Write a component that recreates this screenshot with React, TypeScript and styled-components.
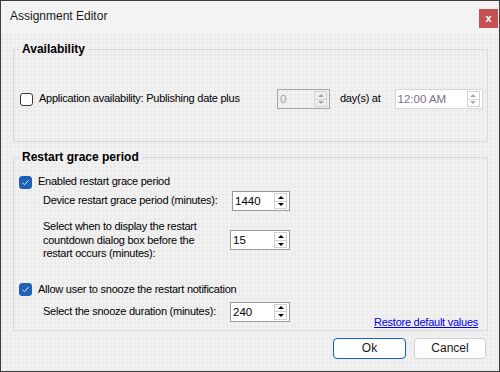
import React from "react";
import styled, { createGlobalStyle } from "styled-components";

const GlobalStyle = createGlobalStyle`
  html, body {
    margin: 0;
    padding: 0;
    background: #ffffff;
  }
  body {
    font-family: "Liberation Sans", Arial, sans-serif;
  }
`;

const Window = styled.div`
  width: 500px;
  height: 372px;
  box-sizing: border-box;
  border: 1px solid #3c3c3c;
  background: #f0f0f0;
  display: flex;
  flex-direction: column;
`;

const TitleBar = styled.div`
  height: 32px;
  flex: none;
  display: flex;
  align-items: center;
  justify-content: space-between;
  padding: 0 1px 0 9px;
  background: #f3f3f3;
`;

const Title = styled.span`
  font-size: 12px;
  color: #1a1a1a;
  margin-top: -2px;
`;

const CloseButton = styled.button`
  width: 19px;
  height: 19px;
  border: 0;
  padding: 0;
  margin-top: 3px;
  background: #c75050;
  color: #ffffff;
  font: bold 11px/19px "Liberation Sans", Arial, sans-serif;
`;

const Body = styled.div`
  flex: 1;
  display: flex;
  flex-direction: column;
  padding: 9px 11px 0 12px;
  background-color: #f0f0f0;
  background-image: radial-gradient(circle, #e9e9e9 0.7px, transparent 0.9px);
  background-size: 4px 4px;
`;

const Group = styled.fieldset<{ $gap?: number }>`
  margin: ${(p) => p.$gap ?? 0}px 0 0 0;
  padding: 0;
  min-width: 0;
  border: 1px solid #d9d9d9;
`;

const Legend = styled.legend`
  margin-left: 5px;
  padding: 0 3px;
  font: bold 12px/14px "Liberation Sans", Arial, sans-serif;
  color: #000000;
`;

const Text = styled.span<{ $ml?: number; $color?: string }>`
  margin-left: ${(p) => p.$ml ?? 0}px;
  font-size: 11px;
  letter-spacing: -0.25px;
  line-height: 13.5px;
  color: ${(p) => p.$color ?? "#000000"};
  white-space: nowrap;
`;

const AvailRow = styled.div`
  display: flex;
  align-items: center;
  padding: 33px 0 32px 6px;
`;

const CheckLabel = styled.label<{ $w?: number }>`
  display: flex;
  align-items: center;
  gap: 6px;
  height: 16px;
  width: ${(p) => (p.$w ? `${p.$w}px` : "auto")};
  flex: none;
`;

const Box = styled.span<{ $checked?: boolean }>`
  width: 13px;
  height: 13px;
  box-sizing: border-box;
  border-radius: 3px;
  border: 1px solid ${(p) => (p.$checked ? "#1d62b6" : "#3a3a3a")};
  background: ${(p) => (p.$checked ? "#1d62b6" : "#ffffff")};
  display: inline-flex;
  align-items: center;
  justify-content: center;
  flex: none;
`;

const GraceBody = styled.div`
  display: flex;
  flex-direction: column;
  padding: 10px 9px 0 5px;
`;

const Indent = styled.div<{ $mt?: number }>`
  padding-left: 24px;
  margin-top: ${(p) => p.$mt ?? 0}px;
`;

const FieldRow = styled.div<{ $label: number }>`
  display: grid;
  grid-template-columns: ${(p) => p.$label}px auto;
  align-items: center;
  justify-content: start;
`;

const SnoozeRow = styled.div`
  display: flex;
  align-items: flex-end;
  justify-content: space-between;
  margin-top: 4px;
  padding-left: 24px;
`;

const SnoozeField = styled(FieldRow)`
  margin-bottom: 8px;
`;

const Link = styled.a`
  font-size: 11px;
  letter-spacing: -0.25px;
  line-height: 14px;
  color: #0000f0;
  text-decoration: underline;
  margin-bottom: 1px;
  cursor: pointer;
`;

const CheckSpacer = styled.div<{ $mt: number }>`
  margin-top: ${(p) => p.$mt}px;
`;

const SpinBox = styled.div<{ $w: number; $ml?: number; $tone: "normal" | "disabled" | "soft" }>`
  width: ${(p) => p.$w}px;
  height: 20px;
  margin-left: ${(p) => p.$ml ?? 0}px;
  box-sizing: border-box;
  display: flex;
  flex: none;
  border: 1px solid
    ${(p) => (p.$tone === "soft" ? "#d6d6d6" : p.$tone === "disabled" ? "#a6a6a6" : "#9a9a9a")};
  background: ${(p) => (p.$tone === "disabled" ? "transparent" : "#ffffff")};
`;

const SpinValue = styled.span<{ $color: string }>`
  flex: 1;
  padding-left: 2px;
  font-size: 11.5px;
  line-height: 18px;
  color: ${(p) => p.$color};
  white-space: nowrap;
`;

const SpinButtons = styled.div`
  width: 13px;
  display: flex;
  flex-direction: column;
  margin: 1px 2px 1px 0;
`;

const SpinArrow = styled.span<{ $down?: boolean; $color: string }>`
  flex: 1;
  box-sizing: border-box;
  border: 1px solid #d2d2d2;
  border-top-width: ${(p) => (p.$down ? 0 : 1)}px;
  display: flex;
  align-items: center;
  justify-content: center;
  &::after {
    content: "";
    border-left: 3px solid transparent;
    border-right: 3px solid transparent;
    ${(p) =>
      p.$down
        ? `border-top: 3px solid ${p.$color};`
        : `border-bottom: 3px solid ${p.$color};`}
  }
`;

const Footer = styled.div`
  display: flex;
  justify-content: flex-end;
  gap: 8px;
  padding: 7px 2px 0 0;
`;

const DialogButton = styled.button<{ $w: number; $primary?: boolean }>`
  width: ${(p) => p.$w}px;
  height: 21px;
  box-sizing: border-box;
  padding: 0;
  border-radius: 4px;
  border: 1px solid ${(p) => (p.$primary ? "#0a64c0" : "#d0d0d0")};
  background: #fdfdfd;
  color: #1a1a1a;
  font: 12px "Liberation Sans", Arial, sans-serif;
`;

type Tone = "normal" | "disabled" | "soft";

const Spinner = ({ value, w, ml, tone = "normal" }: { value: string; w: number; ml?: number; tone?: Tone }) => {
  const textColor = tone === "disabled" ? "#a0a0a0" : tone === "soft" ? "#7a7088" : "#000000";
  const arrowColor = tone === "normal" ? "#000000" : "#a8a8a8";
  return (
    <SpinBox $w={w} $ml={ml} $tone={tone}>
      <SpinValue $color={textColor}>{value}</SpinValue>
      <SpinButtons>
        <SpinArrow $color={arrowColor} />
        <SpinArrow $down $color={arrowColor} />
      </SpinButtons>
    </SpinBox>
  );
};

const Check = ({ checked, label, w }: { checked?: boolean; label: string; w?: number }) => (
  <CheckLabel $w={w}>
    <Box $checked={checked}>
      {checked && (
        <svg width="9" height="9" viewBox="0 0 9 9">
          <path d="M1.5 4.8 L3.5 6.8 L7.6 2.2" fill="none" stroke="#dfe9f7" strokeWidth="1" />
        </svg>
      )}
    </Box>
    <Text>{label}</Text>
  </CheckLabel>
);

const App = () => {
  return (
    <>
      <GlobalStyle />
      <Window>
        <TitleBar>
          <Title>Assignment Editor</Title>
          <CloseButton>x</CloseButton>
        </TitleBar>
        <Body>
          <Group>
            <Legend>Availability</Legend>
            <AvailRow>
              <Check label="Application availability: Publishing date plus" w={257} />
              <Spinner value="0" w={53} tone="disabled" />
              <Text $ml={10}>day(s) at</Text>
              <Spinner value="12:00 AM" w={88} ml={14} tone="soft" />
            </AvailRow>
          </Group>

          <Group $gap={8}>
            <Legend>Restart grace period</Legend>
            <GraceBody>
              <Check checked label="Enabled restart grace period" />
              <Indent $mt={1}>
                <FieldRow $label={189}>
                  <Text>Device restart grace period (minutes):</Text>
                  <Spinner value="1440" w={58} />
                </FieldRow>
              </Indent>
              <Indent $mt={9}>
                <FieldRow $label={187}>
                  <Text>
                    Select when to display the restart
                    <br />
                    countdown dialog box before the
                    <br />
                    restart occurs (minutes):
                  </Text>
                  <Spinner value="15" w={60} />
                </FieldRow>
              </Indent>
              <CheckSpacer $mt={21}>
                <Check checked label="Allow user to snooze the restart notification" />
              </CheckSpacer>
              <SnoozeRow>
                <SnoozeField $label={187}>
                  <Text>Select the snooze duration (minutes):</Text>
                  <Spinner value="240" w={60} />
                </SnoozeField>
                <Link>Restore default values</Link>
              </SnoozeRow>
            </GraceBody>
          </Group>

          <Footer>
            <DialogButton $w={73} $primary>
              Ok
            </DialogButton>
            <DialogButton $w={72}>Cancel</DialogButton>
          </Footer>
        </Body>
      </Window>
    </>
  );
};

export default App;
